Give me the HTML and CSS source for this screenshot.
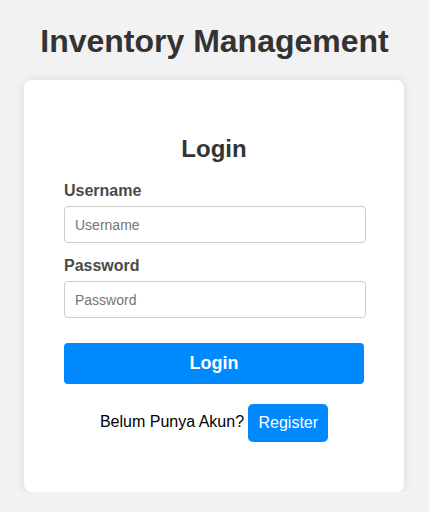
FILE: index.html
```html
<!DOCTYPE html>
<html lang="id">
<head>
<meta charset="utf-8">
<title>Inventory Management</title>
<link rel="stylesheet" href="styles.css">
</head>
<body>
<h1 class="title">Inventory Management</h1>
<div class="card">
  <h2 class="card-title">Login</h2>
  <form class="form">
    <label class="label" for="username">Username</label>
    <input class="input" id="username" type="text" placeholder="Username">
    <label class="label label-second" for="password">Password</label>
    <input class="input" id="password" type="password" placeholder="Password">
    <button class="btn-login" type="button">Login</button>
  </form>
  <p class="register-row">Belum Punya Akun? <button class="btn-register" type="button">Register</button></p>
</div>
</body>
</html>
```
FILE: styles.css
```css
html, body {
  margin: 0;
  padding: 0;
}
body {
  background: #f2f2f2;
  font-family: "Liberation Sans", Arial, sans-serif;
  color: #333;
  padding-top: 23px;
}
.title {
  margin: 0;
  font-size: 32px;
  font-weight: bold;
  text-align: center;
  color: #333;
}
.card {
  width: 300px;
  margin: 20px 0 0 24px;
  padding: 40px 40px 40px;
  background: #fff;
  border-radius: 8px;
  box-shadow: 0 0 10px rgba(0, 0, 0, 0.1);
}
.card-title {
  margin: 15px 0 19px;
  font-size: 24px;
  text-align: center;
  color: #333;
}
.form {
  display: flex;
  flex-direction: column;
}
.label {
  font-size: 16px;
  font-weight: bold;
  color: #4a4a4a;
  margin-bottom: 6px;
}
.label-second {
  margin-top: 14px;
}
.input {
  box-sizing: border-box;
  width: 302px;
  height: 37px;
  padding: 0 10px;
  border: 1px solid #ccc;
  border-radius: 4px;
  font-family: "Liberation Sans", Arial, sans-serif;
  font-size: 14px;
  color: #333;
  background: #fff;
}
.input::placeholder {
  color: #757575;
}
.btn-login {
  margin-top: 25px;
  width: 300px;
  height: 41px;
  border: none;
  border-radius: 4px;
  background: #0088ff;
  color: #fff;
  font-family: "Liberation Sans", Arial, sans-serif;
  font-size: 18px;
  font-weight: bold;
}
.register-row {
  margin: 20px 0 10px;
  text-align: center;
  font-size: 16px;
  color: #000;
}
.btn-register {
  height: 38px;
  padding: 0 10px;
  border: none;
  border-radius: 5px;
  background: #0088ff;
  color: #fff;
  font-family: "Liberation Sans", Arial, sans-serif;
  font-size: 16px;
  vertical-align: middle;
}
```
